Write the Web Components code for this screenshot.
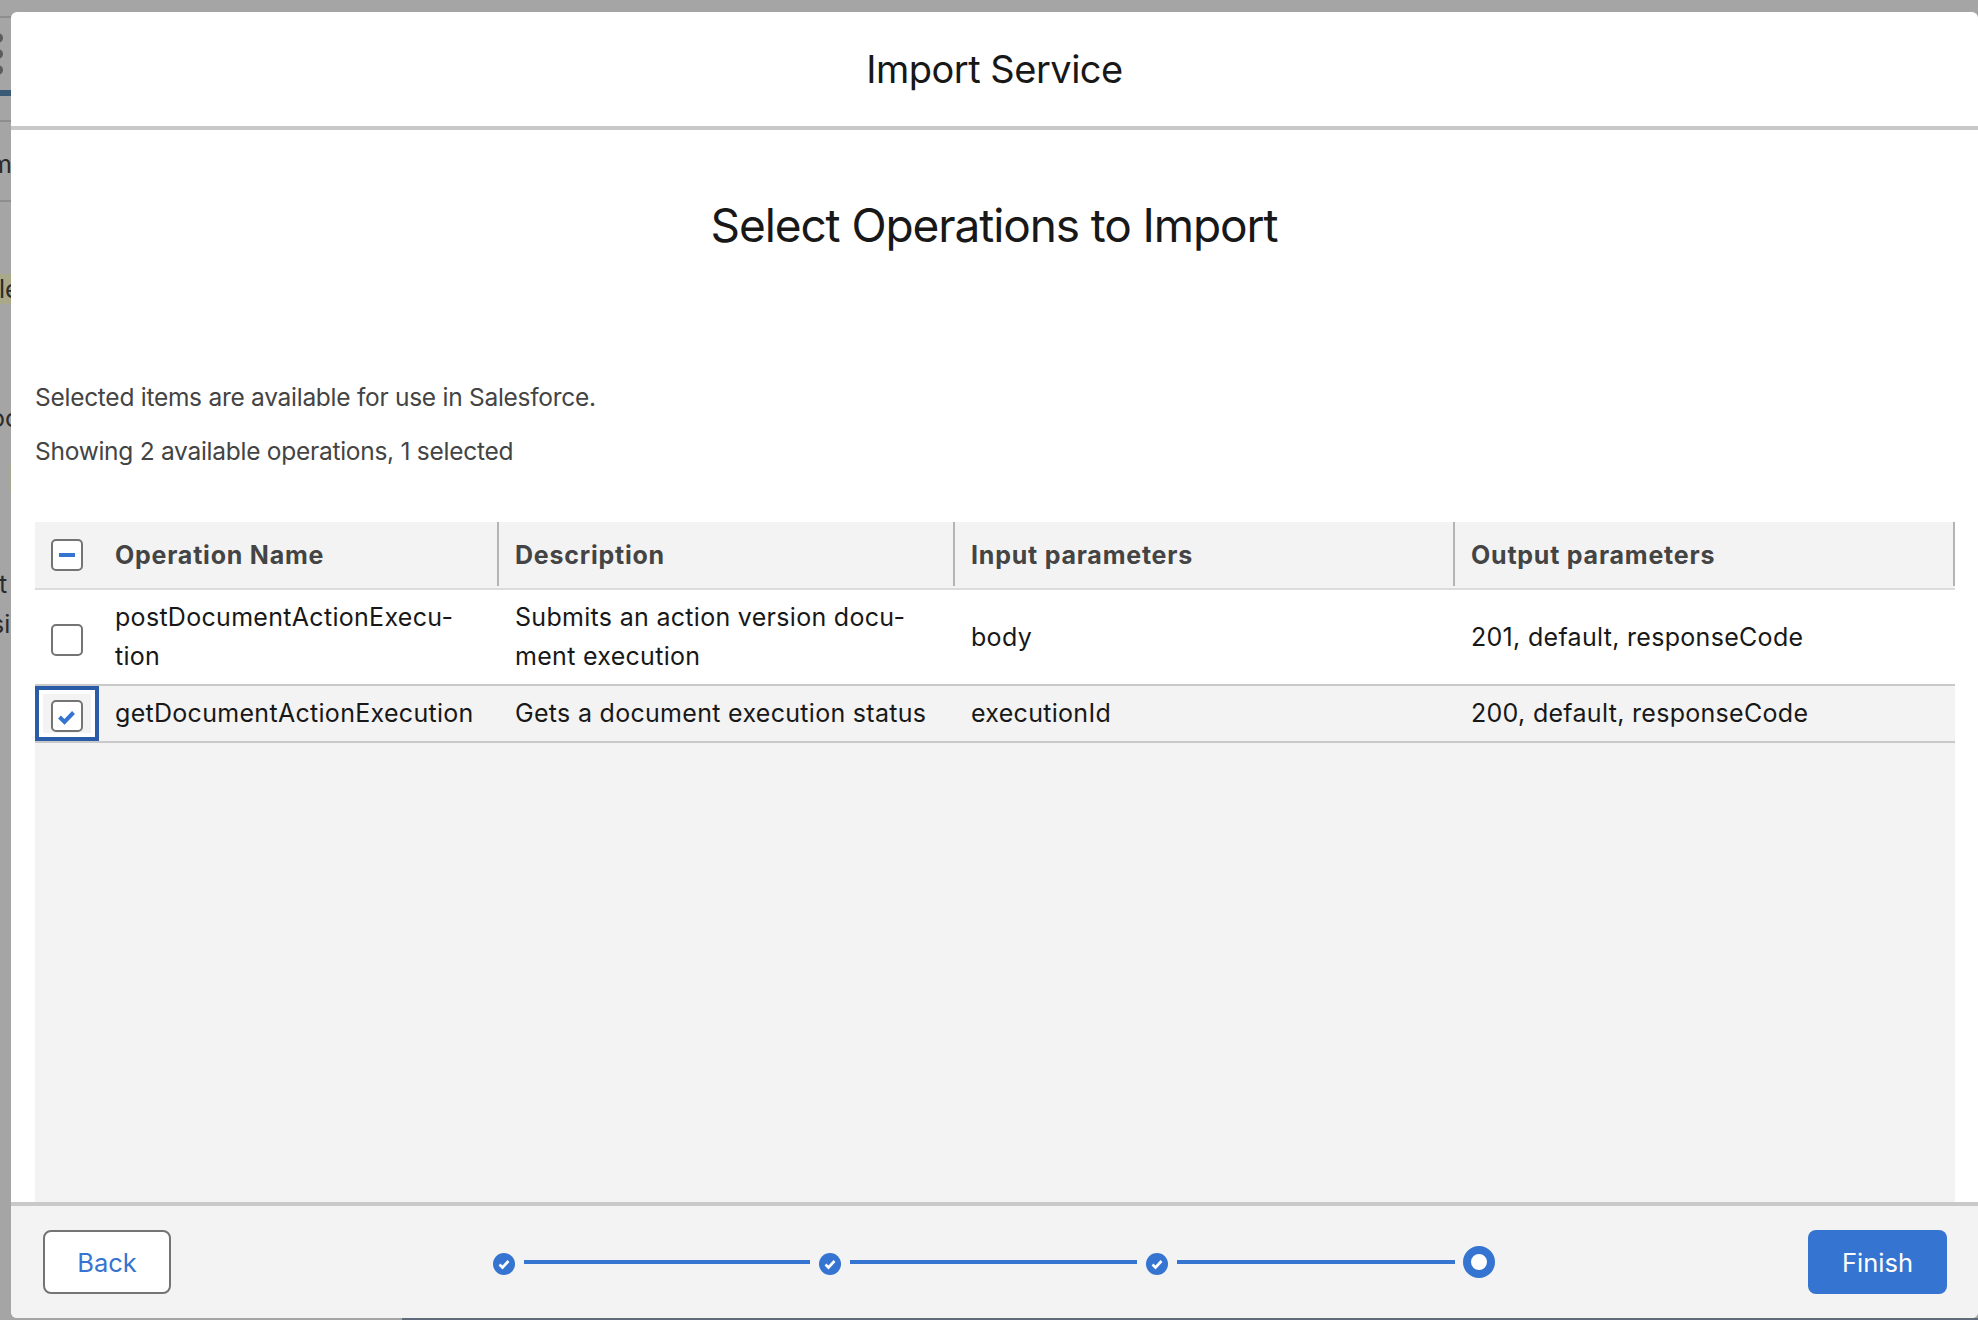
<!DOCTYPE html>
<html>
<head>
<meta charset="utf-8">
<title>Import Service</title>
<style>
  html, body { margin: 0; height: 100%; }
  body {
    background: #a5a5a5;
    font-family: Inter, "Liberation Sans", sans-serif;
    overflow: hidden;
  }
</style>
</head>
<body>
<page-backdrop></page-backdrop>
<wizard-modal heading="Import Service">
  <wizard-step title="Select Operations to Import">
    <p>Selected items are available for use in Salesforce.</p>
    <p>Showing 2 available operations, 1 selected</p>
    <operations-table></operations-table>
  </wizard-step>
  <wizard-footer slot="footer"></wizard-footer>
</wizard-modal>

<script>
const OPERATIONS = [
  { name: "postDocumentActionExecu-<br>tion", desc: "Submits an action version docu-<br>ment execution", input: "body", output: "201, default, responseCode", checked: false },
  { name: "getDocumentActionExecution", desc: "Gets a document execution status", input: "executionId", output: "200, default, responseCode", checked: true, focused: true }
];

// what shows of the page behind the modal, a thin strip on the left
class PageBackdrop extends HTMLElement {
  constructor() {
    super();
    this.attachShadow({ mode: "open" });
    this.shadowRoot.innerHTML = `
      <style>
        :host { position: absolute; left: 0; top: 0; width: 1978px; height: 1320px; overflow: hidden; display: block; }
        .bit { position: absolute; }
        .txt { position: absolute; font-size: 25px; color: #2b2b2b; line-height: 30px; }
        .dot { position: absolute; left: -7px; width: 10px; height: 10px; border-radius: 50%; background: #5c5c5c; }
      </style>
      <div class="bit" style="left:0;top:16px;width:11px;height:2px;background:#8e8e8e"></div>
      <div class="dot" style="top:33px"></div>
      <div class="dot" style="top:49px"></div>
      <div class="dot" style="top:65px"></div>
      <div class="bit" style="left:0;top:90px;width:11px;height:6px;background:#3a5a78"></div>
      <div class="bit" style="left:0;top:120px;width:11px;height:2px;background:#8e8e8e"></div>
      <div class="txt" style="left:-10px;top:149px">m</div>
      <div class="bit" style="left:0;top:200px;width:11px;height:2px;background:#8e8e8e"></div>
      <div class="bit" style="left:0;top:274px;width:11px;height:30px;background:#a9a98a"></div>
      <div class="txt" style="left:-1px;top:274px">le</div>
      <div class="txt" style="left:-10px;top:403px">oc</div>
      <div class="bit" style="left:10px;top:463px;width:1px;height:30px;background:#a8a890"></div>
      <div class="txt" style="left:-1px;top:569px">t</div>
      <div class="txt" style="left:-9px;top:609px">si</div>
      <div class="bit" style="left:402px;top:1318px;width:1576px;height:2px;background:#5f6b7a"></div>
    `;
  }
}

class WizardModal extends HTMLElement {
  constructor() {
    super();
    this.attachShadow({ mode: "open" });
    this.shadowRoot.innerHTML = `
      <style>
        :host {
          position: absolute;
          left: 11px;
          top: 12px;
          width: 1967px;
          height: 1306px;
          display: flex;
          flex-direction: column;
          background: #fff;
          border-radius: 6px;
          overflow: hidden;
        }
        header {
          flex: none;
          height: 114px;
          display: flex;
          align-items: center;
          justify-content: center;
          border-bottom: 4px solid #c9c9c9;
          font-size: 38px;
          letter-spacing: -0.5px;
          color: #181818;
        }
        main { flex: 1; min-height: 0; display: flex; }
      </style>
      <header>${this.getAttribute("heading")}</header>
      <main><slot></slot></main>
      <slot name="footer"></slot>
    `;
  }
}

class WizardStep extends HTMLElement {
  constructor() {
    super();
    this.attachShadow({ mode: "open" });
    this.shadowRoot.innerHTML = `
      <style>
        :host {
          flex: 1;
          min-width: 0;
          display: flex;
          flex-direction: column;
          padding: 0 23px 0 24px;
          font-size: 24.5px;
          letter-spacing: -0.27px;
          color: #444;
        }
        h2 {
          margin: 0;
          padding: 65px 2px 0 0;
          height: 101px;
          font-size: 46px;
          letter-spacing: -1.1px;
          line-height: 60px;
          font-weight: 400;
          text-align: center;
          color: #181818;
        }
        ::slotted(p) { margin: 0; line-height: 39px; }
        ::slotted(p:first-of-type) { margin-top: 82px; margin-bottom: 15px; }
        ::slotted(p:nth-of-type(2)) { margin-bottom: 51px; }
      </style>
      <h2>${this.getAttribute("title")}</h2>
      <slot></slot>
    `;
    this.removeAttribute("title");
  }
}

class OperationsTable extends HTMLElement {
  constructor() {
    super();
    this.attachShadow({ mode: "open" });
    this.shadowRoot.innerHTML = `
      <style>
        :host {
          flex: 1;
          display: flex;
          flex-direction: column;
          background: #f3f3f3;
          font-size: 25px;
          letter-spacing: 0.3px;
          color: #181818;
        }
        .row { display: grid; grid-template-columns: 64px 400px 456px 500px 500px; border-bottom: 2px solid #c9c9c9; }
        .head { height: 66px; border-bottom-color: #dcdcdc; font-weight: 700; color: #444; letter-spacing: 0.78px; }
        .body { background: #fff; }
        .body.on { background: #f3f3f3; }
        .cell { display: flex; align-items: center; padding: 0 16px; line-height: 39px; min-width: 0; box-sizing: border-box; }
        .head .cell { height: 64px; padding-top: 2px; border-right: 2px solid #b4b4b4; }
        .head .box { border-right: 0; }
        .box { justify-content: center; padding: 0; }
        .body .cell { padding-top: 8px; padding-bottom: 8px; }
        .body .box { padding: 5px 0 0; }
        .body .focus { outline: 4px solid #2a5ca8; outline-offset: 4px; margin: 8px; padding: 5px 0 0; background: #f3f3f3; box-shadow: 0 0 0 4px #fff; }
      </style>
      <div class="row head">
        <div class="cell box"><op-checkbox state="mixed"></op-checkbox></div>
        <div class="cell">Operation Name</div>
        <div class="cell">Description</div>
        <div class="cell">Input parameters</div>
        <div class="cell">Output parameters</div>
      </div>
      ${OPERATIONS.map(op => `
        <div class="row body ${op.checked ? "on" : ""}">
          <div class="cell box ${op.focused ? "focus" : ""}"><op-checkbox state="${op.checked ? "checked" : "none"}"></op-checkbox></div>
          <div class="cell"><span>${op.name}</span></div>
          <div class="cell"><span>${op.desc}</span></div>
          <div class="cell">${op.input}</div>
          <div class="cell">${op.output}</div>
        </div>`).join("")}
    `;
  }
}

class OpCheckbox extends HTMLElement {
  constructor() {
    super();
    const state = this.getAttribute("state");
    const marks = {
      mixed: `<rect x="8" y="14" width="16" height="4" fill="#3574d0"/>`,
      checked: `<path d="M8.5 17l5 5 9-9.5" fill="none" stroke="#3574d0" stroke-width="4"/>`,
      none: ""
    };
    this.attachShadow({ mode: "open" });
    this.shadowRoot.innerHTML = `
      <style>
        :host { display: block; width: 32px; height: 32px; }
        svg { display: block; width: 32px; height: 32px; }
      </style>
      <svg viewBox="0 0 32 32" role="img" aria-label="${state}">
        <rect x="1" y="1" width="30" height="30" rx="4" fill="#fff" stroke="#747474" stroke-width="2"/>
        ${marks[state]}
      </svg>
    `;
  }
}

class WizardFooter extends HTMLElement {
  constructor() {
    super();
    this.attachShadow({ mode: "open" });
    this.shadowRoot.innerHTML = `
      <style>
        :host {
          flex: none;
          height: 112px;
          display: flex;
          align-items: center;
          padding: 0 31px 0 32px;
          background: #f3f3f3;
          border-top: 4px solid #c9c9c9;
        }
        button {
          height: 64px;
          box-sizing: border-box;
          border-radius: 8px;
          font: inherit;
          font-size: 25.5px;
          padding: 0;
        }
        .back { width: 128px; background: #fff; color: #3574d0; border: 2px solid #747474; }
        .finish { width: 139px; margin-left: auto; background: #3574d0; color: #fff; border: 0; }
        wizard-progress { margin-left: 322px; }
      </style>
      <button class="back">Back</button>
      <wizard-progress></wizard-progress>
      <button class="finish">Finish</button>
    `;
  }
}

class WizardProgress extends HTMLElement {
  constructor() {
    super();
    this.attachShadow({ mode: "open" });
    const dot = `<svg class="dot" viewBox="0 0 22 22" aria-hidden="true"><circle cx="11" cy="11" r="11" fill="#3574d0"/><path d="M6.5 11.5l3 3 6-6.5" fill="none" stroke="#fff" stroke-width="2.6"/></svg>`;
    this.shadowRoot.innerHTML = `
      <style>
        :host { display: flex; align-items: center; }
        .dot { width: 22px; height: 22px; margin-top: 4px; flex: none; }
        .line { height: 4px; background: #3574d0; margin: 0 9px; flex: none; }
        .ring { width: 32px; height: 32px; box-sizing: border-box; border: 8px solid #3574d0; border-radius: 50%; background: #fff; flex: none; }
      </style>
      ${dot}<div class="line" style="width:286px"></div>
      ${dot}<div class="line" style="width:287px"></div>
      ${dot}<div class="line" style="width:278px;margin-right:8px"></div>
      <div class="ring"></div>
    `;
  }
}

customElements.define("page-backdrop", PageBackdrop);
customElements.define("op-checkbox", OpCheckbox);
customElements.define("wizard-progress", WizardProgress);
customElements.define("wizard-footer", WizardFooter);
customElements.define("operations-table", OperationsTable);
customElements.define("wizard-step", WizardStep);
customElements.define("wizard-modal", WizardModal);
</script>
</body>
</html>
